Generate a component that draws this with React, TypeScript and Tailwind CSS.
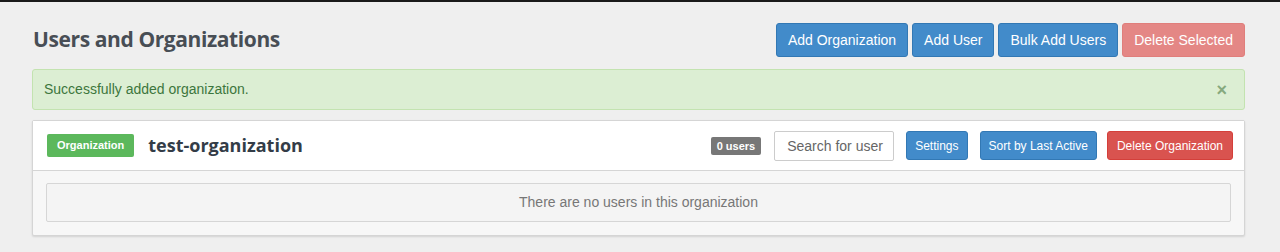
export default function App() {
  return (
    <div className="min-h-[252px] w-[1280px] bg-[#efefef] font-['Liberation_Sans',Arial,sans-serif]">
      <div className="h-[2px] bg-[#1a1a1a]" />
      <div className="pl-[32px] pr-[35px] pt-[21px]">
        {/* Header row */}
        <div className="flex items-center justify-between">
          <h1 className="pl-[1px] text-[21px] font-bold text-[#484e55] font-['Open_Sans',sans-serif] tracking-[-0.4px]">
            Users and Organizations
          </h1>
          <div className="flex gap-[4px]">
            <button className="h-[34px] rounded-[3px] border border-[#3278b4] bg-[#428bca] px-[11px] text-[14px] text-white">
              Add Organization
            </button>
            <button className="h-[34px] rounded-[3px] border border-[#3278b4] bg-[#428bca] px-[11px] text-[14px] text-white">
              Add User
            </button>
            <button className="h-[34px] rounded-[3px] border border-[#3278b4] bg-[#428bca] px-[11px] text-[14px] text-white">
              Bulk Add Users
            </button>
            <button className="h-[34px] rounded-[3px] border border-[#e07e7b] bg-[#e48785] px-[11px] text-[14px] text-white">
              Delete Selected
            </button>
          </div>
        </div>

        {/* Alert */}
        <div className="mt-[12px] flex h-[41px] items-center justify-between rounded-[3px] border border-[#c3e3b0] bg-[#dceed3] pl-[11px] pr-[17px] text-[14px] text-[#3c763d]">
          <span>Successfully added organization.</span>
          <span className="text-[18px] font-bold leading-none text-[#86a97e]">×</span>
        </div>

        {/* Organization panel */}
        <div className="mt-[10px] rounded-[2px] border border-[#d5d5d5] bg-[#f7f7f7] shadow-[0_1px_2px_rgba(0,0,0,0.12)]">
          <div className="flex h-[50px] items-center justify-between border-b border-[#d5d5d5] bg-white pl-[14px] pr-[11px]">
            <div className="flex items-center gap-[14px]">
              <span className="rounded-[2px] bg-[#5cb85c] px-[10px] py-[5px] text-[11px] font-bold leading-[13px] text-white">
                Organization
              </span>
              <span className="text-[18px] font-bold text-[#333c47] font-['Open_Sans',sans-serif]">test-organization</span>
            </div>
            <div className="flex items-center">
              <span className="rounded-[2px] bg-[#777777] px-[6px] py-[3px] text-[11px] font-bold leading-[12px] text-white">
                0 users
              </span>
              <input
                placeholder="Search for user"
                className="ml-[13px] h-[30px] w-[120px] rounded-[2px] border border-[#cccccc] bg-white pl-[12px] pr-[2px] text-[14px] text-[#555] placeholder-[#666] outline-none"
              />
              <button className="ml-[12px] h-[29px] rounded-[3px] border border-[#3278b4] bg-[#428bca] px-[8px] text-[12px] text-white">
                Settings
              </button>
              <button className="ml-[12px] h-[29px] rounded-[3px] border border-[#3278b4] bg-[#428bca] px-[8px] text-[12px] text-white">
                Sort by Last Active
              </button>
              <button className="ml-[10px] h-[29px] rounded-[3px] border border-[#d43f3a] bg-[#d9534f] px-[9px] text-[12px] text-white">
                Delete Organization
              </button>
            </div>
          </div>
          <div className="px-[13px] pb-[13px] pt-[12px]">
            <div className="flex h-[39px] items-center justify-center rounded-[2px] border border-[#d6d6d6] bg-[#f4f4f4] text-[14px] text-[#777]">
              There are no users in this organization
            </div>
          </div>
        </div>
      </div>
    </div>
  );
}
